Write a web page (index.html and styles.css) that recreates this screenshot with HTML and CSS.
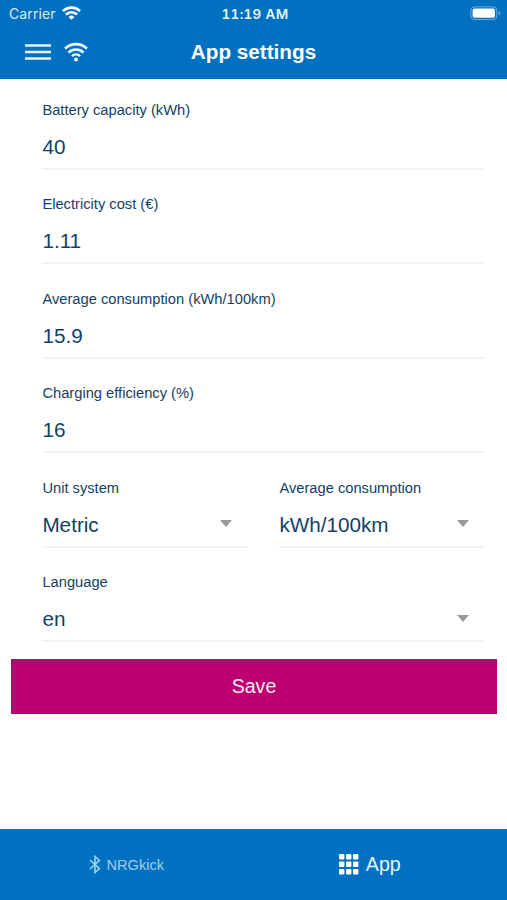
FILE: index.html
```html
<!DOCTYPE html>
<html lang="en">

<head>
    <meta charset="UTF-8">
    <meta name="viewport" content="width=device-width, initial-scale=1.0">
    <title>App settings</title>
    <link rel="stylesheet" href="styles.css">
</head>

<body>
    <header>
        <div class="status">
            <div class="carrier">
                <span>Carrier</span>
                <svg class="status-wifi" width="19" height="14" viewBox="0 0 19 14" fill="none" stroke="#fff" stroke-width="2.7">
                    <path d="M1 5.1a12 12 0 0 1 17 0" />
                    <path d="M4 8.5a7.8 7.8 0 0 1 11 0" />
                    <path d="M6.5 10.9a4.3 4.3 0 0 1 6 0l-3 2.9z" fill="#fff" stroke="none" />
                </svg>
            </div>
            <div class="time">11:19 AM</div>
            <svg class="battery" width="31" height="15" viewBox="0 0 31 15">
                <rect x=".8" y=".8" width="26" height="12.8" rx="3.8" fill="none" stroke="#70afe0" />
                <rect x="2.6" y="2.6" width="22.4" height="9.2" rx="2" fill="#fff" />
                <path d="M28.6 5v4.6q1.6-.8 1.6-2.3t-1.6-2.3" fill="#70afe0" />
            </svg>
        </div>
        <nav class="toolbar">
            <div class="tools">
                <svg width="26" height="18" viewBox="0 0 26 18" stroke="#e4f4ff" stroke-width="2.6">
                    <path d="M0 2.5h26M0 9h26M0 15.5h26" />
                </svg>
                <svg width="24" height="20" viewBox="0 0 24 20" fill="none" stroke="#f4fbff" stroke-width="2.6">
                    <path d="M1.1 6.6a15.6 15.6 0 0 1 21.8 0" />
                    <path d="M4.5 10.5a10.8 10.8 0 0 1 15 0" />
                    <path d="M8 14.1a5.8 5.8 0 0 1 8 0" />
                    <circle cx="12" cy="17.5" r="2" fill="#f4fbff" stroke="none" />
                </svg>
            </div>
            <h1>App settings</h1>
        </nav>
    </header>

    <main>
        <form class="settings">
            <div class="field">
                <div class="label">Battery capacity (kWh)</div>
                <div class="value">40</div>
            </div>
            <div class="field">
                <div class="label">Electricity cost (€)</div>
                <div class="value">1.11</div>
            </div>
            <div class="field">
                <div class="label">Average consumption (kWh/100km)</div>
                <div class="value">15.9</div>
            </div>
            <div class="field">
                <div class="label">Charging efficiency (%)</div>
                <div class="value">16</div>
            </div>
            <div class="row">
                <div class="field">
                    <div class="label">Unit system</div>
                    <div class="value select">Metric</div>
                </div>
                <div class="field">
                    <div class="label">Average consumption</div>
                    <div class="value select">kWh/100km</div>
                </div>
            </div>
            <div class="field">
                <div class="label">Language</div>
                <div class="value select">en</div>
            </div>
        </form>
        <button class="save" type="button">Save</button>
    </main>

    <footer>
        <div class="tab">
            <svg width="12" height="19" viewBox="0 0 12 19" fill="none" stroke="#a5cdec" stroke-width="1.6">
                <path d="M1 5l9.4 8.6L6 17.6V1.4l4.4 4L1 14" />
            </svg>
            <span>NRGkick</span>
        </div>
        <div class="tab active">
            <svg width="20" height="21" viewBox="0 0 20 21" fill="#fff">
                <rect x="0" y="0" width="5.4" height="5.6" rx="1" />
                <rect x="7" y="0" width="5.4" height="5.6" rx="1" />
                <rect x="14" y="0" width="5.4" height="5.6" rx="1" />
                <rect x="0" y="7.5" width="5.4" height="5.6" rx="1" />
                <rect x="7" y="7.5" width="5.4" height="5.6" rx="1" />
                <rect x="14" y="7.5" width="5.4" height="5.6" rx="1" />
                <rect x="0" y="15" width="5.4" height="5.6" rx="1" />
                <rect x="7" y="15" width="5.4" height="5.6" rx="1" />
                <rect x="14" y="15" width="5.4" height="5.6" rx="1" />
            </svg>
            <span>App</span>
        </div>
    </footer>
</body>

</html>
```
FILE: styles.css
```css
* {
    box-sizing: border-box;
}

body {
    margin: 0;
    height: 100vh;
    display: flex;
    flex-direction: column;
    background-color: #fff;
    color: #123f66;
    font-family: "Liberation Sans", Arial, sans-serif;
}

svg {
    display: block;
    flex: none;
}

header {
    height: 79px;
    background-color: #0070c1;
    color: #fff;
}

.status {
    height: 27px;
    padding: 0 6px 0 9px;
    display: grid;
    grid-template-columns: 1fr auto 1fr;
    align-items: center;
    font-family: Inter, sans-serif;
    font-size: 13.5px;
}

.carrier {
    display: flex;
    align-items: center;
    gap: 6px;
    color: #d9efff;
    font-size: 14px;
    letter-spacing: 0.1px;
}

.status-wifi {
    margin-top: -2px;
}

.time {
    font-weight: 600;
    font-variant-numeric: tabular-nums;
    letter-spacing: 0.3px;
    color: #e6f5ff;
}

.battery {
    justify-self: end;
}

.toolbar {
    height: 49px;
    padding: 0 25px;
    display: grid;
    grid-template-columns: 1fr auto 1fr;
    align-items: center;
}

.tools {
    display: flex;
    align-items: center;
    gap: 13px;
}

h1 {
    margin: 0;
    font-size: 20.7px;
    line-height: 24px;
}

main {
    flex: 1;
    padding: 20.5px 10px 0 11px;
}

.settings {
    padding: 0 12px 0 31px;
    display: flex;
    flex-direction: column;
    gap: 24.5px;
}

.row {
    display: grid;
    grid-template-columns: 1fr 1fr;
    gap: 31px;
}

.field {
    height: 70px;
    border-bottom: 2px solid #f3f3f4;
}

.label {
    padding-left: 0.4px;
    font-size: 14.7px;
    line-height: 20px;
}

.value {
    padding: 15px 0 0 0.4px;
    font-size: 20.7px;
    line-height: 24px;
}

.select {
    display: flex;
    justify-content: space-between;
    align-items: center;
}

.select::after {
    content: "";
    margin: -2px 16px 0 0;
    border: 6px solid transparent;
    border-top: 7px solid #999;
    border-bottom: 0;
}

.save {
    display: block;
    width: 100%;
    height: 55px;
    margin-top: 17px;
    padding: 0;
    border: 0;
    background-color: #bd006f;
    color: #ffeaf8;
    font-family: inherit;
    font-size: 19.6px;
}

footer {
    height: 71px;
    display: grid;
    grid-template-columns: 1fr 1fr;
    background-color: #0070c1;
}

.tab {
    display: flex;
    justify-content: center;
    align-items: center;
    gap: 5px;
    color: #a5cdec;
    font-size: 14.6px;
}

.active {
    padding-right: 21px;
    gap: 7px;
    color: #e4f4ff;
    font-size: 19.6px;
}
```
